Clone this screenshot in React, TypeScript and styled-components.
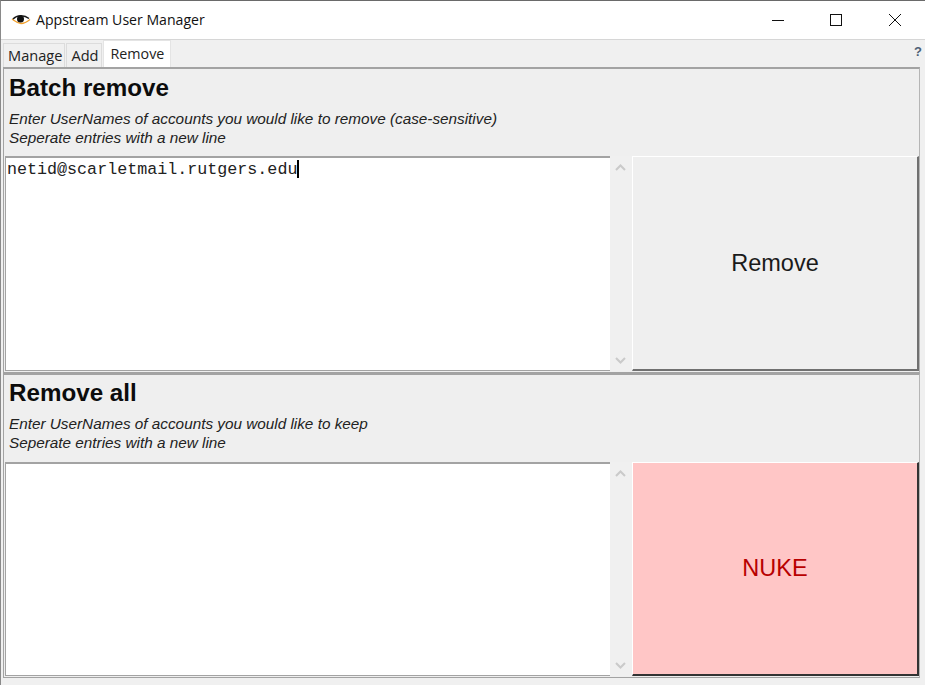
// App.tsx
import React from 'react'
import styled, { createGlobalStyle } from 'styled-components'

const cores = {
  fundo: '#efefef',
  borda: '#a3a3a3',
  bordaClara: '#d6d6d6',
  rosa: '#ffc6c6',
  vermelho: '#b80000',
}

const GlobalStyle = createGlobalStyle`
  html, body {
    margin: 0;
    padding: 0;
    overflow: hidden;
    background: ${cores.fundo};
  }
  * {
    box-sizing: border-box;
  }
`

const Janela = styled.div`
  width: 925px;
  height: 685px;
  display: flex;
  flex-direction: column;
  background: #f0f0f0;
  border-top: 1px solid #6a6a6a;
  border-left: 1px solid #8a8a8a;
  font-family: 'Liberation Sans', Arial, sans-serif;
  color: #111;
  overflow: hidden;
`

const BarraTitulo = styled.div`
  height: 38px;
  flex: none;
  display: flex;
  align-items: center;
  background: #fff;
  padding-left: 10px;
`

const Titulo = styled.span`
  font-family: 'Open Sans', sans-serif;
  font-size: 14.1px;
  margin-left: 5px;
  margin-bottom: 1px;
  color: #111;
`

const BotoesJanela = styled.div`
  margin-left: auto;
  display: flex;
  height: 100%;
  padding-right: 1px;
`

const BotaoJanela = styled.div`
  width: 58.5px;
  display: flex;
  align-items: center;
  justify-content: center;
`

const LinhaAbas = styled.div`
  height: 28px;
  flex: none;
  display: flex;
  align-items: flex-end;
  padding-left: 2px;
  border-top: 1px solid ${cores.bordaClara};
  position: relative;
`

const Aba = styled.div<{ $ativa?: boolean }>`
  height: ${(p) => (p.$ativa ? 27 : 24)}px;
  padding: ${(p) => (p.$ativa ? '0 6px 2px 7px' : '0 2px 2px 4px')};
  display: flex;
  align-items: ${(p) => (p.$ativa ? 'center' : 'flex-end')};
  margin-right: 1px;
  font-family: 'Open Sans', sans-serif;
  font-size: ${(p) => (p.$ativa ? 14.3 : 14.6)}px;
  color: #222;
  background: ${(p) => (p.$ativa ? '#fff' : '#f0f0f0')};
  border: 1px solid ${(p) => (p.$ativa ? '#e4e4e4' : '#dcdcdc')};
  border-bottom: none;
`

const Ajuda = styled.span`
  position: absolute;
  right: 3px;
  top: 4px;
  font-weight: bold;
  font-size: 13px;
  color: #4d5f75;
`

const Conteudo = styled.div`
  flex: 1;
  display: grid;
  grid-template-rows: 306px 1fr;
  padding: 0 5px 7px 2px;
  min-height: 0;
`

const Painel = styled.section`
  display: flex;
  flex-direction: column;
  background: ${cores.fundo};
  border: 1px solid ${cores.borda};
  border-top-width: 2px;
  border-right-color: #b5b5b5;
  padding-left: 1px;
  min-height: 0;
`

const Cabecalho = styled.header<{ $subido?: boolean }>`
  height: 87px;
  flex: none;
  padding: ${(p) => (p.$subido ? 4 : 5)}px 0 0 4px;
`

const TituloPainel = styled.h2`
  margin: 0;
  font-size: 24.2px;
  line-height: 27px;
  font-weight: bold;
  color: #0c0c0c;
`

const Instrucoes = styled.p`
  margin: 8px 0 0;
  font-size: 15.3px;
  line-height: 19px;
  font-style: italic;
  color: #222;
`

const LinhaEntrada = styled.div`
  flex: 1;
  display: flex;
  padding-bottom: 1px;
  min-height: 0;
`

const CaixaTexto = styled.div`
  width: 605px;
  background: #fff;
  border: 1px solid ${cores.borda};
  border-top-width: 2px;
  border-right: none;
  padding: 2px 1px;
  font-family: 'Liberation Mono', 'Courier New', monospace;
  font-size: 16.7px;
  line-height: 19px;
  color: #222;
`

const Cursor = styled.span`
  display: inline-block;
  width: 2px;
  height: 18px;
  background: #000;
  vertical-align: -4px;
`

const BarraRolagem = styled.div`
  width: 22px;
  flex: none;
  display: flex;
  flex-direction: column;
  justify-content: space-between;
  align-items: center;
  padding: 8px 2px 7px 0;
  background: #f0f0f0;
`

const Botao = styled.button<{ $perigo?: boolean }>`
  width: 287px;
  flex: none;
  font-family: 'Liberation Sans', Arial, sans-serif;
  font-size: 23.5px;
  cursor: pointer;
  color: ${(p) => (p.$perigo ? cores.vermelho : '#1a1a1a')};
  background: ${(p) => (p.$perigo ? cores.rosa : cores.fundo)};
  border-style: solid;
  border-width: 1px 2px 2px 1px;
  border-color: ${(p) =>
    p.$perigo ? '#fff #333 #333 #fff' : '#fff #707070 #707070 #fff'};
  padding: 0;
`

const Olho = () => (
  <svg width="20" height="12" viewBox="0 0 20 12">
    <path d="M1 5 C4 7 6 9 10 9.500 C13 9.500 16 8 19 5.500" fill="none" stroke="#f2a02c" strokeWidth="1.3" />
    <path d="M2 5 C6 1 13 0.500 18 4.500" fill="none" stroke="#1a1a1a" strokeWidth="1.5" />
    <circle cx="9.500" cy="5" r="3.500" fill="#111" />
  </svg>
)

const Minimizar = () => (
  <svg width="12" height="12" viewBox="0 0 12 12">
    <path d="M0 6.500H12" stroke="#111" strokeWidth="1" />
  </svg>
)

const Maximizar = () => (
  <svg width="12" height="12" viewBox="0 0 12 12">
    <rect x="0.500" y="0.500" width="11" height="11" fill="none" stroke="#111" />
  </svg>
)

const Fechar = () => (
  <svg width="12" height="12" viewBox="0 0 12 12">
    <path d="M0 0L12 12M12 0L0 12" stroke="#111" strokeWidth="1" />
  </svg>
)

const Seta = ({ cima }: { cima?: boolean }) => (
  <svg width="11" height="7" viewBox="0 0 11 7">
    <path
      d={cima ? 'M1 6L5.500 1.500L10 6' : 'M1 1L5.500 5.500L10 1'}
      fill="none"
      stroke="#cacaca"
      strokeWidth="2"
    />
  </svg>
)

const Rolagem = () => (
  <BarraRolagem>
    <Seta cima />
    <Seta />
  </BarraRolagem>
)

const App: React.FC = () => {
  return (
    <>
      <GlobalStyle />
      <Janela>
        <BarraTitulo>
          <Olho />
          <Titulo>Appstream User Manager</Titulo>
          <BotoesJanela>
            <BotaoJanela>
              <Minimizar />
            </BotaoJanela>
            <BotaoJanela>
              <Maximizar />
            </BotaoJanela>
            <BotaoJanela>
              <Fechar />
            </BotaoJanela>
          </BotoesJanela>
        </BarraTitulo>
        <LinhaAbas>
          <Aba>Manage</Aba>
          <Aba>Add</Aba>
          <Aba $ativa>Remove</Aba>
          <Ajuda>?</Ajuda>
        </LinhaAbas>
        <Conteudo>
          <Painel>
            <Cabecalho>
              <TituloPainel>Batch remove</TituloPainel>
              <Instrucoes>
                Enter UserNames of accounts you would like to remove (case-sensitive)
                <br />
                Seperate entries with a new line
              </Instrucoes>
            </Cabecalho>
            <LinhaEntrada>
              <CaixaTexto>
                netid@scarletmail.rutgers.edu
                <Cursor />
              </CaixaTexto>
              <Rolagem />
              <Botao>Remove</Botao>
            </LinhaEntrada>
          </Painel>
          <Painel>
            <Cabecalho $subido>
              <TituloPainel>Remove all</TituloPainel>
              <Instrucoes>
                Enter UserNames of accounts you would like to keep
                <br />
                Seperate entries with a new line
              </Instrucoes>
            </Cabecalho>
            <LinhaEntrada>
              <CaixaTexto />
              <Rolagem />
              <Botao $perigo>NUKE</Botao>
            </LinhaEntrada>
          </Painel>
        </Conteudo>
      </Janela>
    </>
  )
}

export default App
